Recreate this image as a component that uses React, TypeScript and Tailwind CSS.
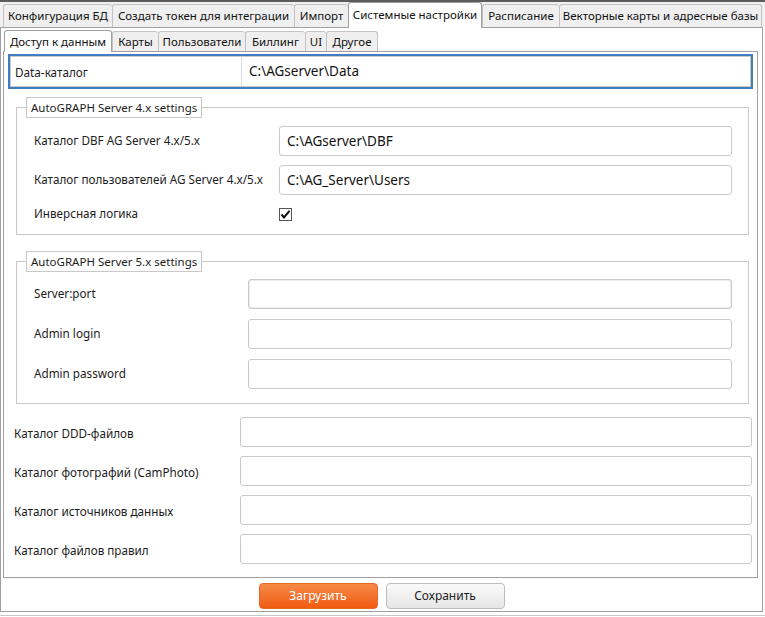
import React from "react";

const outerTabs = [
  { label: "Конфигурация БД", w: 109 },
  { label: "Создать токен для интеграции", w: 182 },
  { label: "Импорт", w: 54 },
  { label: "Системные настройки", w: 134, active: true },
  { label: "Расписание", w: 77 },
  { label: "Векторные карты и адресные базы", w: 203 },
];

const innerTabs = [
  { label: "Доступ к данным", w: 108, active: true },
  { label: "Карты", w: 46 },
  { label: "Пользователи", w: 87 },
  { label: "Биллинг", w: 60 },
  { label: "UI", w: 21 },
  { label: "Другое", w: 52 },
];

function Input({ value, shadow }: { value?: string; shadow?: boolean }) {
  return (
    <div
      className={
        "h-[30px] flex-1 rounded-[3px] border border-[#c9c9c9] bg-white flex items-center pl-[7px] text-[13.5px] text-[#111] " +
        (shadow ? "shadow-[inset_0_0_2px_rgba(0,0,0,0.25)]" : "")
      }
    >
      {value}
    </div>
  );
}

export default function App() {
  return (
    <div
      className="w-[765px] h-[617px] bg-white overflow-hidden text-[#1c1c1c] flex flex-col"
      style={{ fontFamily: "'Noto Sans', 'DejaVu Sans', sans-serif" }}
    >
      {/* outer tab strip */}
      <div className="h-[27px] bg-[#f0f0f0] border-t-[2px] border-[#5c5c5c] flex items-end pl-[3px] relative z-10">
        {outerTabs.map((t) =>
          t.active ? (
            <div
              key={t.label}
              style={{ width: t.w }}
              className="h-[26px] -mb-[1px] pb-[1px] bg-white border border-b-0 border-[#a0a0a0] rounded-t-[3px] flex items-center justify-center text-[11.5px] text-[#111] shrink-0 whitespace-nowrap"
            >
              {t.label}
            </div>
          ) : (
            <div
              key={t.label}
              style={{ width: t.w }}
              className="h-[23px] bg-[#efefef] border border-r-0 border-b-0 border-[#c3c3c3] rounded-t-[3px] flex items-center justify-center text-[11.5px] text-[#111] shrink-0 whitespace-nowrap last:border-r"
            >
              {t.label}
            </div>
          )
        )}
      </div>

      {/* outer panel */}
      <div className="w-[763px] h-[585px] border border-[#a0a0a0] bg-white flex flex-col">
        {/* inner tabs */}
        <div className="h-[22px] flex items-end pl-[3px] mt-[1px] relative z-10">
          {innerTabs.map((t) =>
            t.active ? (
              <div
                key={t.label}
                style={{ width: t.w }}
                className="h-[22px] -mb-[1px] bg-white border border-b-0 border-[#a0a0a0] rounded-t-[3px] flex items-center justify-center text-[11.5px] text-[#111] shrink-0 whitespace-nowrap"
              >
                {t.label}
              </div>
            ) : (
              <div
                key={t.label}
                style={{ width: t.w }}
                className="h-[20px] bg-[#efefef] border border-r-0 border-b-0 border-[#c3c3c3] rounded-t-[3px] flex items-center justify-center text-[11.5px] text-[#111] shrink-0 whitespace-nowrap last:border-r"
              >
                {t.label}
              </div>
            )
          )}
        </div>

        {/* inner panel */}
        <div className="ml-[2px] w-[755px] h-[527px] border border-[#a0a0a0] bg-white flex flex-col text-[11.7px]">
          {/* Data row */}
          <div className="mt-[2px] ml-[4px] w-[745px] h-[35px] border-2 border-[#3f7cc0] flex">
            <div className="flex-1 border border-[#c9c9c9] flex items-center">
              <div className="w-[230px] pl-[4px] pt-[3px]">Data-каталог</div>
              <div className="flex-1 h-full border-l border-[#dcdcdc] flex items-center pl-[7px] text-[13.5px] text-[#111]">
                C:\AGserver\Data
              </div>
            </div>
          </div>

          {/* fieldset 1 */}
          <fieldset className="mt-[8px] ml-[12px] w-[733px] border border-[#c8c8c8] pl-[9px] pr-[16px] pb-[10px]">
            <legend className="border border-[#c8c8c8] h-[21px] px-[4px] flex items-center text-[11.5px]">
              AutoGRAPH Server 4.x settings
            </legend>
            <div className="flex flex-col gap-[9px] mt-[8px] pl-[8px]">
              <div className="flex items-center">
                <div className="w-[245px]">Каталог DBF AG Server 4.x/5.x</div>
                <Input value="C:\AGserver\DBF" />
              </div>
              <div className="flex items-center">
                <div className="w-[245px]">Каталог пользователей AG Server 4.x/5.x</div>
                <Input value="C:\AG_Server\Users" />
              </div>
              <div className="flex items-center h-[20px]">
                <div className="w-[245px]">Инверсная логика</div>
                <div className="w-[13px] h-[13px] border border-[#555] bg-white flex items-center justify-center">
                  <svg width="11" height="11" viewBox="0 0 11 11">
                    <path d="M1.5 5.5 L4 8.5 L9.5 1.8" stroke="#111" strokeWidth="2" fill="none" />
                  </svg>
                </div>
              </div>
            </div>
          </fieldset>

          {/* fieldset 2 */}
          <fieldset className="mt-[16px] ml-[12px] w-[733px] border border-[#c8c8c8] pl-[9px] pr-[16px] pb-[14px]">
            <legend className="border border-[#c8c8c8] h-[21px] px-[4px] flex items-center text-[11.5px]">
              AutoGRAPH Server 5.x settings
            </legend>
            <div className="flex flex-col gap-[10px] mt-[7px] pl-[8px]">
              <div className="flex items-center">
                <div className="w-[214px]">Server:port</div>
                <Input shadow />
              </div>
              <div className="flex items-center">
                <div className="w-[214px]">Admin login</div>
                <Input />
              </div>
              <div className="flex items-center">
                <div className="w-[214px]">Admin password</div>
                <Input />
              </div>
            </div>
          </fieldset>

          {/* bottom rows */}
          <div className="flex flex-col gap-[9px] mt-[13px] pl-[10px] pr-[5px]">
            {["Каталог DDD-файлов", "Каталог фотографий (CamPhoto)", "Каталог источников данных", "Каталог файлов правил"].map(
              (l) => (
                <div key={l} className="flex items-center">
                  <div className="w-[226px] pt-[4px]">{l}</div>
                  <Input />
                </div>
              )
            )}
          </div>
        </div>

        {/* buttons */}
        <div className="flex justify-center gap-[8px] mt-[5px]">
          <button className="w-[119px] h-[26px] rounded-[4px] bg-gradient-to-b from-[#f58a45] to-[#f05a0c] border border-[#e8662a] text-white text-[12px]">
            Загрузить
          </button>
          <button className="w-[119px] h-[26px] rounded-[4px] bg-gradient-to-b from-[#fafafa] to-[#e6e6e6] border border-[#bdbdbd] text-[#222] text-[12px]">
            Сохранить
          </button>
        </div>
      </div>
      <div className="h-[1px] mt-[3px] bg-[#c8c8c8]" />
    </div>
  );
}
